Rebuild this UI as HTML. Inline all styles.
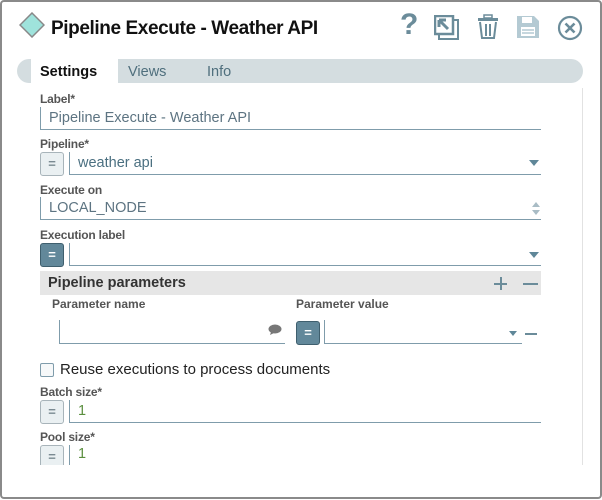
<!DOCTYPE html>
<html><head><style>
*{box-sizing:border-box;margin:0;padding:0}
body{width:602px;height:500px;background:#fff;font-family:"Liberation Sans",sans-serif;position:relative;overflow:hidden}
.frame{position:absolute;left:0;top:0;width:602px;height:499px;border:2px solid #8a8a8a;border-radius:4px;background:#fff}
.abs{position:absolute}
.lbl{position:absolute;left:40px;font-size:12px;font-weight:bold;color:#555;letter-spacing:-0.2px}
.inp{position:absolute;border-left:1px solid #7f9cab;border-bottom:1px solid #7f9cab;font-size:14.5px;color:#5d7482;padding-left:8px;line-height:22px}
.btn{position:absolute;width:24px;height:24px;border:1px solid #a8b4ba;border-radius:3px;background:#eaf0f2;color:#7a8a92;font-size:13px;text-align:center;line-height:21px;font-weight:bold}
.btn.dark{background:#62889a;border-color:#3f5f6e;color:#fff}
.arr{position:absolute;width:0;height:0;border-left:5px solid transparent;border-right:5px solid transparent;border-top:6px solid #5f8799}
</style></head><body>
<div class="frame"></div>
<svg class="abs" style="left:19px;top:12px" width="26" height="26"><polygon points="13,1 25,13 13,25 1,13" fill="#9fe3dc" stroke="#888" stroke-width="1.5"/></svg>
<div class="abs" style="left:51px;top:18px;font-size:19px;font-weight:bold;color:#111;letter-spacing:-0.4px">Pipeline Execute - Weather API</div>
<div class="abs" style="left:400px;top:10px;font-size:30px;font-weight:bold;color:#6b8c9a;line-height:30px">?</div>
<svg class="abs" style="left:434px;top:15px" width="26" height="26"><rect x="5" y="5" width="19" height="19" fill="none" stroke="#6b8c9a" stroke-width="2"/><rect x="1" y="1" width="18" height="18" fill="#fff" stroke="#6b8c9a" stroke-width="2.5"/><path d="M5 5 L14 14 M5 5 h7 M5 5 v7" stroke="#6b8c9a" stroke-width="3" fill="none"/></svg>
<svg class="abs" style="left:476px;top:14px" width="24" height="26"><rect x="2" y="4" width="20" height="3" fill="#6b8c9a"/><rect x="8" y="1" width="8" height="3" fill="none" stroke="#6b8c9a" stroke-width="1.5"/><path d="M4 8 L6 24 H18 L20 8" fill="none" stroke="#6b8c9a" stroke-width="2"/><path d="M10 10 V22 M14 10 V22" stroke="#6b8c9a" stroke-width="2"/></svg>
<svg class="abs" style="left:516px;top:15px" width="24" height="24"><path d="M1 1 H18 L23 6 V23 H1 Z" fill="#b4cad3"/><rect x="6" y="2" width="10" height="6" fill="#fff"/><rect x="5" y="12" width="14" height="9" fill="#fff"/><path d="M6 15 H18 M6 18 H18" stroke="#b4cad3" stroke-width="1.5"/></svg>
<svg class="abs" style="left:557px;top:15px" width="26" height="26"><circle cx="13" cy="13" r="11" fill="none" stroke="#6b8c9a" stroke-width="2.2"/><path d="M8.5 8.5 L17.5 17.5 M17.5 8.5 L8.5 17.5" stroke="#6b8c9a" stroke-width="2.6"/></svg>

<div class="abs" style="left:17px;top:59px;width:566px;height:24px;background:#d4dde0;border-radius:12px"></div>
<div class="abs" style="left:31px;top:59px;width:87px;height:24px;background:#fff"></div>
<div class="abs" style="left:40px;top:64px;font-size:14.5px;font-weight:bold;color:#111">Settings</div>
<div class="abs" style="left:128px;top:64px;font-size:14.5px;color:#4f6f7d">Views</div>
<div class="abs" style="left:207px;top:64px;font-size:14.5px;color:#4f6f7d">Info</div>
<div class="abs" style="left:582px;top:88px;width:1px;height:377px;background:#e2e2e2"></div>

<div class="lbl" style="top:92px">Label*</div>
<div class="inp" style="left:40px;top:107px;width:501px;height:23px">Pipeline Execute - Weather API</div>

<div class="lbl" style="top:137px">Pipeline*</div>
<div class="btn" style="left:40px;top:152px">=</div>
<div class="inp" style="left:69px;top:152px;width:472px;height:23px;color:#4a6f80">weather api</div>
<div class="arr" style="left:529px;top:160px"></div>

<div class="lbl" style="top:183px">Execute on</div>
<div class="inp" style="left:40px;top:197px;width:501px;height:23px">LOCAL_NODE</div>
<div class="abs" style="left:532px;top:202px;width:0;height:0;border-left:4px solid transparent;border-right:4px solid transparent;border-bottom:5px solid #a9bcc5"></div>
<div class="abs" style="left:532px;top:210px;width:0;height:0;border-left:4px solid transparent;border-right:4px solid transparent;border-top:5px solid #a9bcc5"></div>

<div class="lbl" style="top:228px">Execution label</div>
<div class="btn dark" style="left:40px;top:243px">=</div>
<div class="inp" style="left:69px;top:243px;width:472px;height:23px"></div>
<div class="arr" style="left:529px;top:252px"></div>

<div class="abs" style="left:40px;top:271px;width:501px;height:24px;background:#e6e6e6"></div>
<div class="abs" style="left:48px;top:275px;font-size:14.5px;font-weight:bold;color:#333">Pipeline parameters</div>
<div class="abs" style="left:494px;top:283px;width:13px;height:2px;background:#6b8c9a"></div>
<div class="abs" style="left:499.5px;top:277px;width:2px;height:13px;background:#6b8c9a"></div>
<div class="abs" style="left:523px;top:283px;width:15px;height:2px;background:#6b8c9a"></div>
<div class="abs" style="left:52px;top:297px;font-size:12px;font-weight:bold;color:#555">Parameter name</div>
<div class="abs" style="left:296px;top:297px;font-size:12px;font-weight:bold;color:#555">Parameter value</div>
<div class="inp" style="left:59px;top:320px;width:226px;height:24px"></div>
<svg class="abs" style="left:268px;top:324px" width="14" height="12"><ellipse cx="7" cy="5" rx="6.5" ry="4.5" fill="#777"/><path d="M3 8 L2 11 L6 9" fill="#777"/></svg>
<div class="btn dark" style="left:296px;top:321px">=</div>
<div class="inp" style="left:324px;top:320px;width:198px;height:24px"></div>
<div class="arr" style="left:509px;top:331px;border-left-width:4px;border-right-width:4px;border-top-width:5px"></div>
<div class="abs" style="left:525px;top:333px;width:12px;height:2px;background:#6b8c9a"></div>

<div class="abs" style="left:40px;top:363px;width:14px;height:14px;border:1.5px solid #7f9cab;border-radius:2px;background:#f6f8f9"></div>
<div class="abs" style="left:60px;top:361px;font-size:15px;color:#222">Reuse executions to process documents</div>

<div class="lbl" style="top:385px">Batch size*</div>
<div class="btn" style="left:40px;top:400px">=</div>
<div class="inp" style="left:69px;top:400px;width:472px;height:23px;color:#5b8f3f">1</div>
<div class="lbl" style="top:430px">Pool size*</div>
<div class="btn" style="left:40px;top:445px;height:20px;border-bottom:none;border-radius:3px 3px 0 0">=</div>
<div class="abs" style="left:69px;top:445px;width:1px;height:20px;background:#7f9cab"></div>
<div class="abs" style="left:78px;top:446px;font-size:14.5px;color:#5b8f3f">1</div>
</body></html>
